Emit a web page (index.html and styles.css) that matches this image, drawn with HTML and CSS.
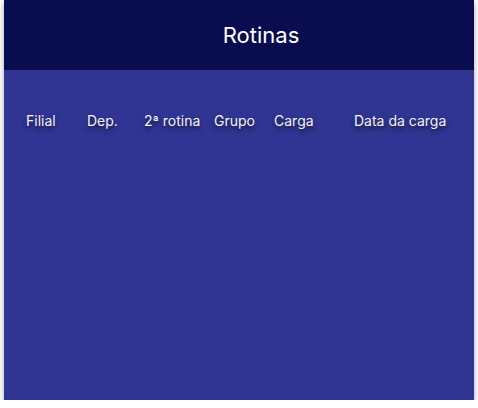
FILE: index.html
```html
<!DOCTYPE html>
<html lang="pt">
<head>
<meta charset="utf-8">
<title>Rotinas</title>
<link rel="stylesheet" href="styles.css">
</head>
<body>
<div class="card">
  <header class="card-head">
    <h1 class="title">Rotinas</h1>
  </header>
  <div class="card-body">
    <div class="cols">
      <span class="col">Filial</span>
      <span class="col">Dep.</span>
      <span class="col">2ª rotina</span>
      <span class="col">Grupo</span>
      <span class="col">Carga</span>
      <span class="col">Data da carga</span>
    </div>
  </div>
</div>
</body>
</html>
```
FILE: styles.css
```css
html, body {
  margin: 0;
  padding: 0;
  background: #ffffff;
}
body {
  font-family: Inter, "Noto Sans", sans-serif;
  padding: 0 4px;
}
.card {
  width: 470px;
  height: 400px;
  background: #303492;
  box-shadow: 0 2px 6px rgba(0, 0, 0, 0.35);
  display: flex;
  flex-direction: column;
}
.card-head {
  height: 70px;
  background: #0a0c50;
  display: flex;
  align-items: center;
  justify-content: center;
  padding-left: 44px;
  box-sizing: border-box;
}
.title {
  margin: 0;
  font-size: 22px;
  font-weight: 400;
  color: #ffffff;
}
.card-body {
  padding-top: 42px;
}
.cols {
  display: grid;
  grid-template-columns: 61px 57px 70px 60px 80px auto;
  padding-left: 22px;
  font-size: 14px;
  color: #f2f2f2;
  text-shadow: 0 3px 4px rgba(0, 0, 0, 0.6);
  line-height: 17px;
  white-space: nowrap;
}
```
